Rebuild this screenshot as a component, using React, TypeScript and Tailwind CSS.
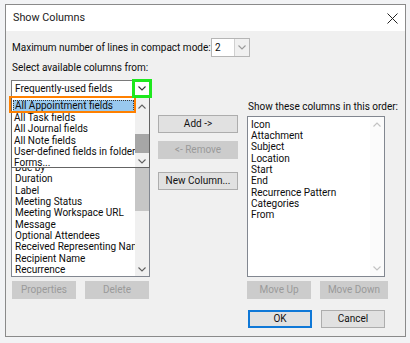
import React from "react";

function Chev({ dir = "down", color = "#444", w = 8, h = 5 }: { dir?: "down" | "up"; color?: string; w?: number; h?: number }) {
  return (
    <svg width={w} height={h} viewBox="0 0 8 5" className="block">
      <polyline
        points={dir === "down" ? "0.5,0.5 4,4 7.5,0.5" : "0.5,4.5 4,1 7.5,4.5"}
        fill="none"
        stroke={color}
        strokeWidth="1.1"
      />
    </svg>
  );
}

function Btn({ children, disabled = false, def = false, w = "w-[64px]" }: { children: React.ReactNode; disabled?: boolean; def?: boolean; w?: string }) {
  const base = "h-[18px] flex items-center justify-center text-[10px] leading-none flex-none";
  if (disabled) return <div className={`${base} ${w} bg-[#cccccc] border border-[#cccccc] text-[#9a9a9a]`}>{children}</div>;
  if (def) return <div className={`${base} ${w} bg-[#e1e1e1] border-2 border-[#0f78d7] text-[#111]`}>{children}</div>;
  return <div className={`${base} ${w} bg-[#e1e1e1] border border-[#adadad] text-[#111]`}>{children}</div>;
}

const leftItems = [
  "Created",
  "Do Not AutoArchive",
  "Due by",
  "Duration",
  "Label",
  "Meeting Status",
  "Meeting Workspace URL",
  "Message",
  "Optional Attendees",
  "Received Representing Name",
  "Recipient Name",
  "Recurrence",
];

const rightItems = ["Icon", "Attachment", "Subject", "Location", "Start", "End", "Recurrence Pattern", "Categories", "From"];

const dropItems = ["All Task fields", "All Journal fields", "All Note fields", "User-defined fields in folder", "Forms..."];

export default function App() {
  return (
    <div className="w-[410px] h-[343px] bg-[#f2f3f5] pt-[4px] pl-[5px] overflow-hidden [font-family:Roboto,'Noto_Sans',sans-serif] text-[#0c0c0c]">
      <div className="w-[401px] h-[333px] border border-[#8a8a8a] flex flex-col">
        {/* title bar */}
        <div className="h-[26px] bg-white flex items-center justify-between pl-[7px] pr-[7px] flex-none">
          <span className="text-[10.8px] leading-none text-[#1a1a1a] pt-[1px]">Show Columns</span>
          <svg width="11" height="11" viewBox="0 0 11 11" className="block">
            <path d="M0.5 0.5 L10.5 10.5 M10.5 0.5 L0.5 10.5" stroke="#222" strokeWidth="1" />
          </svg>
        </div>
        {/* content */}
        <div className="flex-1 bg-[#f0f0f0] relative pl-[5px] flex flex-col text-[10px]">
          {/* row 1 */}
          <div className="mt-[7px] h-[19px] flex items-center">
            <span className="w-[200px] pl-[1px] flex-none whitespace-nowrap">Maximum number of lines in compact mode:</span>
            <div className="w-[39px] h-[19px] border border-[#b5b5b5] bg-white flex items-stretch">
              <div className="flex-1 pl-[3px] flex items-center leading-none">2</div>
              <div className="w-[15px] bg-[#f0f0f0] border-l border-[#d0d0d0] flex items-center justify-center">
                <Chev color="#9a9a9a" />
              </div>
            </div>
          </div>
          {/* row 2 */}
          <div className="mt-[5px] h-[12px] leading-[12px] pl-[1px] whitespace-nowrap">Select available columns from:</div>
          {/* combo */}
          <div className="mt-[6px] h-[17px] w-[140px] border border-[#7a7a7a] bg-white flex items-center">
            <span className="pl-[3px] leading-none whitespace-nowrap">Frequently-used fields</span>
          </div>
          {/* main */}
          <div className="flex h-[180px]">
            {/* left listbox */}
            <div className="w-[139px] h-[180px] border border-[#828790] bg-white flex flex-none">
              <div className="flex-1 overflow-hidden flex flex-col justify-end pb-[0.5px] pl-[3px] leading-[11.35px] whitespace-nowrap">
                {leftItems.map((t) => (
                  <div key={t} className="h-[11.35px] overflow-hidden">{t}</div>
                ))}
              </div>
              <div className="w-[14px] bg-[#f0f0f0] flex flex-col">
                <div className="h-[113px] bg-[#c6c6c6] flex-none" />
                <div className="flex-1" />
                <div className="h-[14px] flex items-center justify-center">
                  <Chev color="#606060" />
                </div>
              </div>
            </div>
            {/* middle buttons */}
            <div className="ml-[8px] w-[80px] flex flex-col flex-none">
              <div className="mt-[18px]"><Btn w="w-[80px]">Add -&gt;</Btn></div>
              <div className="mt-[8px]"><Btn w="w-[80px]" disabled>&lt;- Remove</Btn></div>
              <div className="mt-[13px]"><Btn w="w-[80px]">New Column...</Btn></div>
            </div>
            {/* right */}
            <div className="ml-[9px] w-[138px] flex flex-col flex-none">
              <div className="mt-[4px] h-[12px] leading-[12px] whitespace-nowrap pl-[1px]">Show these columns in this order:</div>
              <div className="mt-[3px] h-[161px] border border-[#828790] bg-white flex">
                <div className="flex-1 pt-[1.5px] pl-[3px] leading-[11.35px] whitespace-nowrap">
                  {rightItems.map((t) => (
                    <div key={t} className="h-[11.35px]">{t}</div>
                  ))}
                </div>
                <div className="w-[14px] bg-[#fbfbfb] flex flex-col justify-between py-[5px] items-center">
                  <Chev dir="up" color="#c2c2c2" />
                  <Chev color="#c2c2c2" />
                </div>
              </div>
            </div>
          </div>
          {/* bottom buttons */}
          <div className="mt-[4px] flex">
            <div className="ml-[1px]"><Btn disabled>Properties</Btn></div>
            <div className="ml-[9px]"><Btn disabled>Delete</Btn></div>
            <div className="ml-[98px]"><Btn disabled>Move Up</Btn></div>
            <div className="ml-[9px]"><Btn disabled w="w-[68px]">Move Down</Btn></div>
          </div>
          <div className="mt-[11px] flex">
            <div className="ml-[237px]"><Btn def>OK</Btn></div>
            <div className="ml-[9px]"><Btn>Cancel</Btn></div>
          </div>

          {/* dropdown overlay */}
          <div className="absolute left-[5px] top-[66px] w-[139px] h-[71px] border border-[#646464] bg-white flex">
            <div className="w-[123px] flex-none pt-[2px] leading-[11.35px] whitespace-nowrap overflow-hidden">
              <div className="h-[12px] mx-[1px] bg-[#99c9ef] border border-dotted border-[#3a3a3a] pl-[1px] leading-[10.5px]">All Appointment fields</div>
              {dropItems.map((t) => (
                <div key={t} className="h-[11.35px] pl-[2px]">{t}</div>
              ))}
            </div>
            <div className="w-[14px] bg-[#f0f0f0] flex flex-col items-center">
              <div className="h-[14px] flex items-center justify-center mt-[1px]"><Chev dir="up" color="#606060" /></div>
              <div className="mt-[21px] w-[14px] h-[19px] bg-[#a6a6a6]" />
              <div className="mt-[2px] h-[12px] flex items-center justify-center"><Chev color="#606060" /></div>
            </div>
          </div>
          {/* orange annotation */}
          <div className="absolute left-[3px] top-[65px] w-[127px] h-[17px] border-[2.5px] border-[#ff8000]" />
          {/* green annotation */}
          <div className="absolute left-[126px] top-[48px] w-[20px] h-[19px] border-[3px] border-[#1ee81e] bg-white flex items-center justify-center">
            <Chev color="#333" />
          </div>
        </div>
      </div>
    </div>
  );
}
